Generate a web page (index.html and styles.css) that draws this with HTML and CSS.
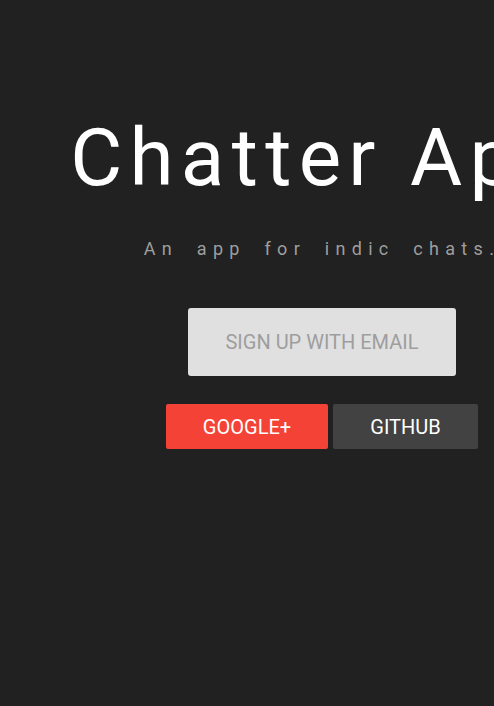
FILE: index.html
```html
<!DOCTYPE html>
<html>
<head>
<meta charset="utf-8">
<link rel="stylesheet" href="styles.css">
</head>
<body>
<main class="hero">
  <h1 class="title">Chatter App</h1>
  <p class="tagline">An app for indic chats.</p>
  <div class="actions">
    <button class="btn btn-email">SIGN UP WITH EMAIL</button>
    <div class="social">
      <button class="btn btn-google">GOOGLE+</button>
      <button class="btn btn-github">GITHUB</button>
    </div>
  </div>
</main>
</body>
</html>
```
FILE: styles.css
```css
html, body {
  margin: 0;
  padding: 0;
  background: #212121;
  overflow: hidden;
  height: 100%;
}
body {
  font-family: Roboto, "Liberation Sans", sans-serif;
}
.hero {
  width: 644px;
  display: flex;
  flex-direction: column;
  align-items: center;
  padding-top: 110px;
}
.title {
  margin: 0;
  font-size: 80px;
  font-weight: 400;
  color: #ffffff;
  letter-spacing: 7.3px;
  line-height: 96px;
  white-space: nowrap;
}
.tagline {
  margin: 31px 0 0;
  font-size: 18px;
  color: #9e9e9e;
  letter-spacing: 6.3px;
  word-spacing: 8px;
  line-height: 24px;
  white-space: nowrap;
}
.actions {
  margin-top: 47px;
  display: flex;
  flex-direction: column;
  align-items: center;
  gap: 28px;
}
.btn {
  border: none;
  font-family: Roboto, "Liberation Sans", sans-serif;
  font-size: 20px;
  cursor: pointer;
}
.btn-email {
  width: 268px;
  height: 68px;
  background: #e0e0e0;
  color: #9e9e9e;
  border-radius: 3px;
}
.social {
  display: flex;
  gap: 5px;
}
.btn-google,
.btn-github {
  height: 45px;
  border-radius: 2px;
  color: #ffffff;
}
.btn-google {
  width: 162px;
  background: #f44336;
}
.btn-github {
  width: 145px;
  background: #424242;
}
```
